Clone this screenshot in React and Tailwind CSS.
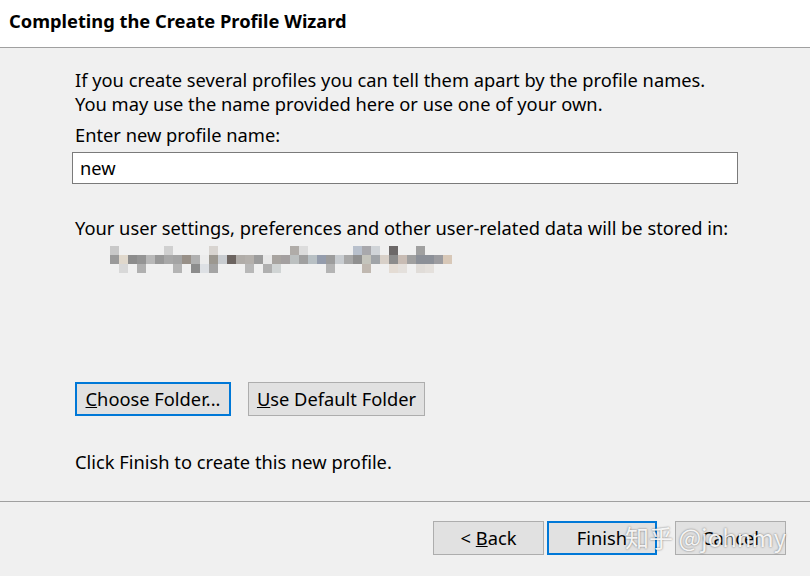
import React from 'react';

const font = { fontFamily: '"Segoe UI", "Noto Sans", "Open Sans", sans-serif' };

// pixelated (blurred) folder path, three rows of 9px blocks
const top = [
  '#c8c8c8', null, null, null, null, null, '#d0d0d0', null, null, null, null, '#d8d4d0', null, null, null, null, null, null, null, null, '#b0aca8', '#dcdcdc', null, null, null, null, null, '#b8c0cc', '#a8a8ac', '#d0d4d8', null, '#6c6868', null, null, '#a0a0a0', null, null, null, null,
];
const mid = [
  '#9a9a9a', '#e0d8cc', '#8c8c8c', '#949494', '#b8b8b8', '#989898', '#a8a8a8', '#a4a4a4', '#989088', '#b0b0b0', '#ececec', '#9c9890', '#c8ccd0', '#6c6460', '#b0aca8', '#b4b0ac', '#9c9c9c', '#e8e8e8', '#a8a4a0', '#a4a0a0', '#bcc0c0', '#a0a0a0', '#b8c0c4', '#949cac', '#9c9c9c', '#c8ccd0', '#a8a8a8', '#909090', '#c4c4bc', '#a0a4a8', '#d8d0c8', '#8c8c8c', '#c8bcb4', '#a0a0a0', '#8c9098', '#8c9098', '#9c9ca0', '#d8c8b8',
];
const bot = [
  null, '#d8d8d8', null, '#b0b0b0', null, null, null, '#b4b4b4', null, '#8c8c8c', '#dde0e4', '#a4a4a4', null, null, null, '#b8b8b8', null, '#b0b0b0', '#d0d4d4', null, null, null, null, null, '#b4b4b4', null, null, null, '#c0b8b0', null, null, '#e4dcd4', '#e4e0dc', null, '#e0dcd8', '#e4e0dc', null, null,
];

function PixelRow({ cells }) {
  return (
    <div className="flex">
      {cells.map((c, i) => (
        <div key={i} className="w-[9px] h-[9px]" style={{ backgroundColor: c || 'transparent' }} />
      ))}
    </div>
  );
}

function Button({ children, focused, className = '' }) {
  return (
    <div
      className={`h-[34px] flex items-center justify-center text-[18.3px] text-[#000] bg-[#e1e1e1] ${
        focused ? 'border-2 border-[#0078d7]' : 'border border-[#adadad]'
      } ${className}`}
    >
      {children}
    </div>
  );
}

export default function App() {
  return (
    <div className="w-[810px] h-[576px] bg-[#f0f0f0] relative overflow-hidden flex flex-col" style={font}>
      <div className="h-[48px] bg-white border-b border-[#a0a0a0] flex items-center pl-[9px] pb-[5px]">
        <h1 className="text-[18.3px] font-bold text-black">Completing the Create Profile Wizard</h1>
      </div>

      <div className="flex-1 pl-[75px] pr-[72px] pt-[20px] text-[18.3px] text-black leading-[24px]">
        <p>If you create several profiles you can tell them apart by the profile names.</p>
        <p>You may use the name provided here or use one of your own.</p>
        <p className="mt-[7px]">Enter new profile name:</p>
        <div className="mt-[5px] -ml-[3px] w-[666px] h-[32px] bg-white border border-[#7a7a7a] flex items-center pl-[7px]">
          new
        </div>
        <p className="mt-[32px]">Your user settings, preferences and other user-related data will be stored in:</p>
        <div className="mt-[6px] ml-[35px]">
          <PixelRow cells={top} />
          <PixelRow cells={mid} />
          <PixelRow cells={bot} />
        </div>

        <div className="mt-[109px] flex gap-[17px]">
          <Button focused className="w-[156px]">
            <span><u>C</u>hoose Folder...</span>
          </Button>
          <Button className="w-[177px]">
            <span><u>U</u>se Default Folder</span>
          </Button>
        </div>

        <p className="mt-[34px]">Click Finish to create this new profile.</p>
      </div>

      <div className="h-[75px] border-t border-[#a0a0a0] flex items-start justify-end pt-[19px] pr-[24px]">
        <Button className="w-[111px]">
          <span>&lt; <u>B</u>ack</span>
        </Button>
        <Button focused className="w-[110px] ml-[3px]">
          <span>Finish</span>
        </Button>
        <Button className="w-[111px] ml-[18px]">
          <span>Cancel</span>
        </Button>
      </div>

      <div
        className="absolute left-[625px] top-[525px] text-[24px] text-white/90 leading-none"
        style={{ fontFamily: '"Noto Sans CJK SC", "Noto Sans", sans-serif', textShadow: '0 0 2px rgba(0,0,0,0.55)' }}
      >
        知乎 @johnmy
      </div>
    </div>
  );
}
